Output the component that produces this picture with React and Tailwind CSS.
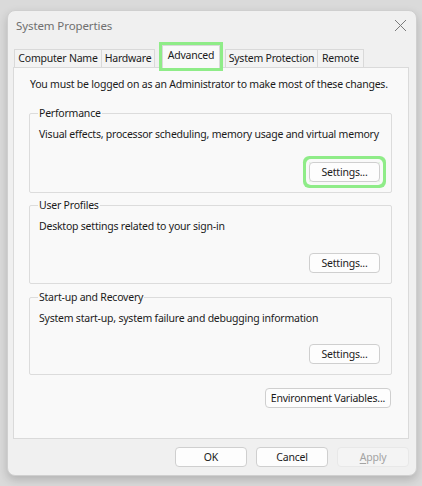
import React from "react";

const font = { fontFamily: '"Noto Sans", "Open Sans", sans-serif' };
const txt = "text-[10.5px] tracking-[-0.22px] text-[#1b1b1b] whitespace-nowrap";

function Btn({ children, className = "", disabled = false }) {
  return (
    <button
      className={
        "h-[20px] rounded-[4px] border text-[10.5px] tracking-[-0.22px] leading-none whitespace-nowrap flex items-center justify-center " +
        (disabled
          ? "border-[#e8e8e8] bg-[#f4f4f4] text-[#a3a3a3] "
          : "border-[#cfcfcf] bg-[#fdfdfd] text-[#1b1b1b] ") +
        className
      }
    >
      {children}
    </button>
  );
}

function Group({ title, desc, gapBefore, highlight = false }) {
  return (
    <fieldset className="border border-[#dcdcdc] rounded-[2px] pl-[9px] pr-[11px] pb-[10px] min-w-0">
      <legend className={"px-[1px] ml-[-1px] leading-[16px] " + txt}>{title}</legend>
      <div className={"mt-[5px] leading-[16px] " + txt}>{desc}</div>
      <div className="flex justify-end" style={{ marginTop: gapBefore }}>
        <div className={highlight ? "rounded-[2px] ring-[3px] ring-[#8fec88] ring-offset-[3px] ring-offset-[#f9f9f9]" : ""}>
          <Btn className="w-[71px]">Settings...</Btn>
        </div>
      </div>
    </fieldset>
  );
}

function Tab({ label, className = "" }) {
  return (
    <div className={"h-[18px] bg-[#f3f3f3] border border-b-0 border-[#d9d9d9] flex items-center justify-center " + txt + " " + className}>
      {label}
    </div>
  );
}

export default function App() {
  return (
    <div className="w-[422px] h-[486px] bg-[#dadada] pt-[10px] pl-[7px] overflow-hidden" style={font}>
      <div className="w-[410px] h-[466px] bg-[#f0f0f0] rounded-[8px] border border-[#cfcfcf] shadow-[0_4px_10px_rgba(0,0,0,0.18)] flex flex-col">
        {/* title bar */}
        <div className="h-[34px] flex items-start justify-between pl-[8px] pr-[8px] pt-[7px]">
          <span className="text-[11.5px] tracking-[-0.1px] leading-[16px] text-[#6f6f6f] whitespace-nowrap">System Properties</span>
          <svg width="13" height="13" viewBox="0 0 13 13" className="mt-[1px] mr-[1px]">
            <path d="M1 1 L12 12 M12 1 L1 12" stroke="#7a7a7a" strokeWidth="1" />
          </svg>
        </div>
        {/* tab strip */}
        <div className="ml-[5px] w-[396px] flex items-end h-[22px] pl-[1px] relative z-10">
          <Tab label="Computer Name" className="w-[88px]" />
          <Tab label="Hardware" className="w-[54px] -ml-[1px]" />
          <div
            className={"w-[58px] h-[23px] ml-[7px] mb-[-1px] bg-[#f9f9f9] border border-b-0 border-[#d9d9d9] ring-[3px] ring-[#8fec88] flex items-center justify-center pb-[2px] " + txt}
          >
            Advanced
          </div>
          <Tab label="System Protection" className="w-[93px] ml-[5px]" />
          <Tab label="Remote" className="w-[47px] -ml-[1px]" />
        </div>
        {/* tab page */}
        <div className="ml-[5px] w-[396px] h-[372px] bg-[#f9f9f9] border border-[#dadada] pt-[8px] pl-[15px] pr-[16px] flex flex-col">
          <div className={"pl-[1px] leading-[16px] " + txt}>
            You must be logged on as an Administrator to make most of these changes.
          </div>
          <div className="mt-[13px] flex flex-col">
            <Group title="Performance" desc="Visual effects, processor scheduling, memory usage and virtual memory" gapBefore={20} highlight />
            <div className="h-[4px]" />
            <Group title="User Profiles" desc="Desktop settings related to your sign-in" gapBefore={19} />
            <div className="h-[5px]" />
            <Group title="Start-up and Recovery" desc="System start-up, system failure and debugging information" gapBefore={18} />
          </div>
          <div className="mt-[13px] flex justify-end pr-[1px]">
            <Btn className="w-[126px]">Environment Variables...</Btn>
          </div>
        </div>
        {/* dialog buttons */}
        <div className="mt-[8px] flex justify-end gap-[9px] pr-[7px]">
          <Btn className="w-[72px]">OK</Btn>
          <Btn className="w-[72px]">Cancel</Btn>
          <Btn className="w-[72px]" disabled>
            <span><span className="underline underline-offset-2">A</span>pply</span>
          </Btn>
        </div>
      </div>
    </div>
  );
}
